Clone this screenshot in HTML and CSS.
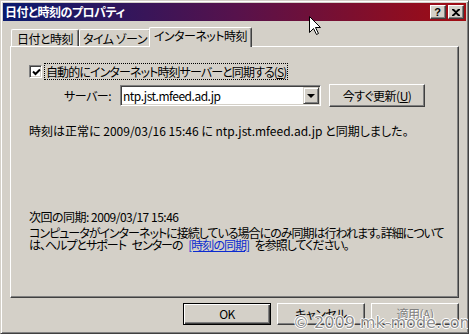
FILE: index.html
```html
<!DOCTYPE html>
<html lang="ja">
<head>
<meta charset="utf-8">
<title>日付と時刻のプロパティ</title>
<link rel="stylesheet" href="styles.css">
</head>
<body>
<div class="window">
  <div class="titlebar">
    <span class="title">日付と時刻のプロパティ</span>
    <div class="caption-btns">
      <div class="cap-btn help">?</div>
      <div class="cap-btn close">
        <svg width="8" height="7" viewBox="0 0 8 7"><path d="M0 0h2l2 2 2-2h2v1L5 3.5 8 6v1H6L4 5 2 7H0V6l3-2.5L0 1z" fill="#000"/></svg>
      </div>
    </div>
  </div>
  <div class="client">
    <div class="tabs">
      <div class="tab t1">日付と時刻</div>
      <div class="tab t2">タイム ゾーン</div>
      <div class="tab t3 selected">インターネット時刻</div>
    </div>
    <div class="panel">
      <div class="check-row">
        <div class="checkbox">
          <svg width="9" height="9" viewBox="0 0 9 9"><path d="M1 3.5 3.5 6 8 1.5" fill="none" stroke="#000" stroke-width="2"/></svg>
        </div>
        <span class="focus-label">自動的にインターネット時刻サーバーと同期する(<u>S</u>)</span>
      </div>
      <div class="server-row">
        <span class="server-label">サーバー:</span>
        <div class="combo">
          <span class="combo-text">ntp.jst.mfeed.ad.jp</span>
          <div class="combo-btn"><span class="arrow"></span></div>
        </div>
        <div class="btn refresh">今すぐ更新(<u>U</u>)</div>
      </div>
      <p class="status">時刻は正常に 2009/03/16 15:46 に ntp.jst.mfeed.ad.jp と同期しました。</p>
      <p class="next">次回の同期: 2009/03/17 15:46</p>
      <p class="note">コンピュータがインターネットに接続している場合にのみ同期は行われます。詳細について<br>は、ヘルプとサポート センターの <span class="link">[時刻の同期]</span> を参照してください。</p>
    </div>
    <div class="buttons">
      <div class="btn default">OK</div>
      <div class="btn">キャンセル</div>
      <div class="btn disabled">適用(<u>A</u>)</div>
    </div>
  </div>
  <svg class="cursor" width="13" height="20" viewBox="0 0 13 20"><path d="M0.5 0.5V16.5L4.5 12.5L7.5 18.5L9.5 17.5L6.5 11.5H11.5Z" fill="#fff" stroke="#000" stroke-width="1"/></svg>
  <div class="watermark">© 2009 mk-mode.com</div>
</div>
</body>
</html>
```
FILE: styles.css
```css
* { box-sizing: border-box; }
body { margin: 0; background: #d4d0c8; }
.window {
  position: relative;
  width: 469px;
  height: 334px;
  background: #d4d0c8;
  border: 1px solid;
  border-color: #d4d0c8 #404040 #404040 #d4d0c8;
  box-shadow: inset 1px 1px #fff, inset -1px -1px #808080;
  padding: 2px;
  display: flex;
  flex-direction: column;
  font-family: "Noto Sans CJK JP", sans-serif;
  font-size: 12px;
  letter-spacing: -0.5px;
  font-feature-settings: "palt";
  color: #000;
  overflow: hidden;
}
.titlebar {
  height: 18px;
  background: linear-gradient(to right, #0a1a6e, #56124c 50%, #a20c12);
  display: flex;
  align-items: center;
  padding: 0 2px;
}
.title {
  color: #fff;
  font-weight: bold;
  font-size: 12px;
  line-height: 18px;
}
.caption-btns { margin-left: auto; display: flex; gap: 2px; }
.cap-btn {
  width: 16px;
  height: 14px;
  background: #d4d0c8;
  border: 1px solid;
  border-color: #fff #404040 #404040 #fff;
  box-shadow: inset -1px -1px #808080;
  display: flex;
  align-items: center;
  justify-content: center;
}
.help {
  font-family: "Liberation Sans", sans-serif;
  font-weight: bold;
  font-size: 11px;
  line-height: 12px;
  letter-spacing: 0;
  padding-right: 1px;
}
.client {
  flex: 1;
  display: flex;
  flex-direction: column;
  padding: 0 7px;
}
.tabs {
  display: flex;
  align-items: flex-end;
  padding: 6px 0 0 1px;
  height: 25px;
}
.tab {
  height: 17px;
  border-top: 1px solid #fff;
  border-left: 1px solid #fff;
  border-right: 1px solid #404040;
  box-shadow: inset -1px 0 #808080;
  border-radius: 2px 2px 0 0;
  padding-top: 2px;
  line-height: 13px;
  text-align: center;
  background: #d4d0c8;
}
.t1 { width: 68px; }
.t2 { width: 72px; }
.t3 { width: 103px; }
.tab.selected {
  position: relative;
  z-index: 1;
  height: 20px;
  margin: 0 -2px -1px -2px;
  padding-top: 1px;
}
.panel {
  height: 252px;
  border: 1px solid;
  border-color: #fff #404040 #404040 #fff;
  box-shadow: inset -1px -1px #808080;
  padding: 16px 0 0 18px;
}
.check-row {
  display: flex;
  align-items: center;
  height: 17px;
}
.checkbox {
  width: 13px;
  height: 13px;
  background: #fff;
  border: 1px solid;
  border-color: #808080 #fff #fff #808080;
  box-shadow: inset 1px 1px #404040, inset -1px -1px #d4d0c8;
  display: flex;
  align-items: center;
  justify-content: center;
  padding: 1px 0 0 1px;
}
.checkbox svg { display: block; }
.focus-label {
  margin-left: 2px;
  border: 1px dotted #000;
  padding: 0 1px;
  line-height: 15px;
  letter-spacing: -0.9px;
}
.server-row {
  display: flex;
  align-items: center;
  margin-top: 4px;
  height: 23px;
}
.server-label {
  margin-left: 35px;
  width: 56px;
}
.combo {
  width: 201px;
  height: 21px;
  background: #fff;
  border: 1px solid;
  border-color: #808080 #fff #fff #808080;
  box-shadow: inset 1px 1px #404040, inset -1px -1px #d4d0c8;
  padding: 1px;
  display: flex;
}
.combo-text {
  flex: 1;
  padding-left: 1px;
  line-height: 17px;
}
.combo-btn {
  width: 16px;
  background: #d4d0c8;
  border: 1px solid;
  border-color: #d4d0c8 #404040 #404040 #d4d0c8;
  box-shadow: inset 1px 1px #fff, inset -1px -1px #808080;
  display: flex;
  align-items: center;
  justify-content: center;
}
.arrow {
  width: 0;
  height: 0;
  border-left: 4px solid transparent;
  border-right: 4px solid transparent;
  border-top: 4px solid #000;
}
.btn {
  width: 88px;
  height: 22px;
  background: #d4d0c8;
  border: 1px solid;
  border-color: #fff #404040 #404040 #fff;
  box-shadow: inset -1px -1px #808080;
  display: flex;
  align-items: center;
  justify-content: center;
  line-height: 14px;
}
.refresh {
  width: 96px;
  height: 23px;
  margin-left: 8px;
}
.status {
  margin: 17px 0 0 0;
  line-height: 14px;
  white-space: nowrap;
  letter-spacing: 0;
}
.next {
  margin: 72px 0 0 0;
  line-height: 13px;
}
.note {
  margin: 4px 0 0 0;
  line-height: 12px;
  white-space: nowrap;
  letter-spacing: -1px;
  word-spacing: 4px;
}
.link {
  color: #0a2ad0;
  text-decoration: underline;
}
.buttons {
  display: flex;
  justify-content: flex-end;
  gap: 6px;
  margin-top: 5px;
}
.btn.default {
  border-color: #000;
  box-shadow: inset 1px 1px #fff, inset -1px -1px #404040, inset -2px -2px #808080;
}
.btn.disabled {
  color: #808080;
  text-shadow: 1px 1px #fff;
}
.cursor {
  position: absolute;
  left: 308px;
  top: 15px;
}
.watermark {
  position: absolute;
  left: 292px;
  top: 313px;
  font-family: "DejaVu Sans", sans-serif;
  font-size: 16px;
  line-height: 18px;
  letter-spacing: 0;
  color: rgba(120, 120, 120, 0.85);
  text-shadow: -1px 0 #fff, 1px 0 #fff, 0 -1px #fff, 0 1px #fff;
  white-space: nowrap;
  font-feature-settings: normal;
}
```
